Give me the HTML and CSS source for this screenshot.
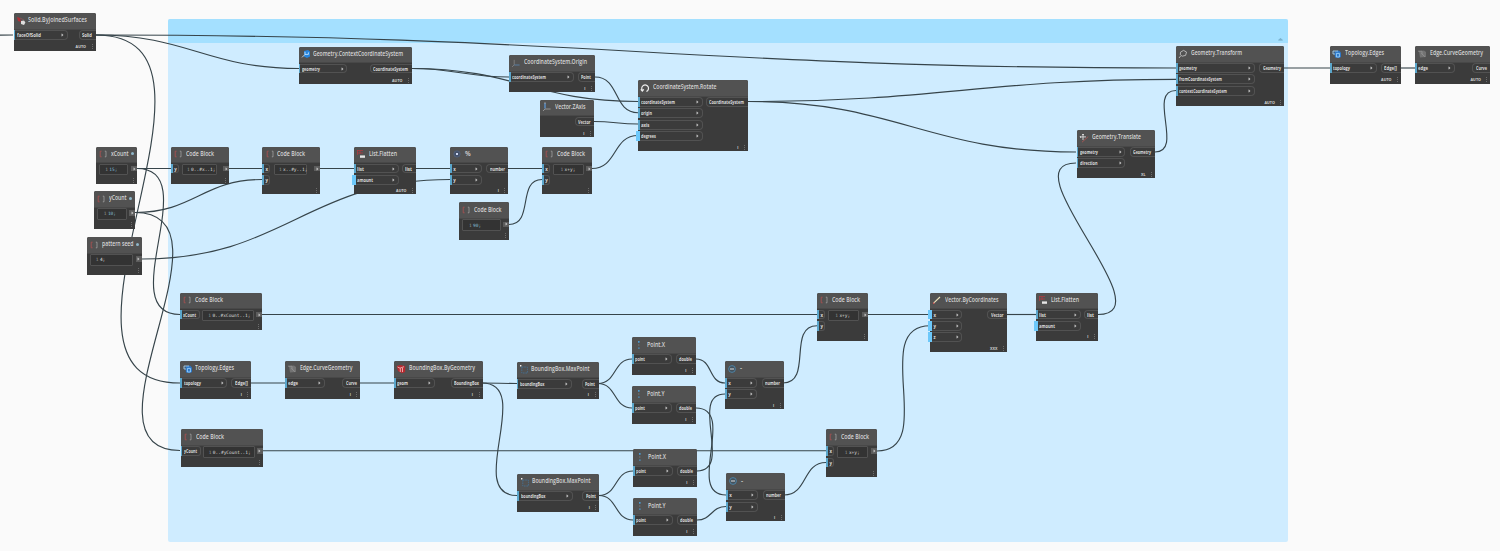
FILE: index.html
```html
<!DOCTYPE html>
<html lang="en">
<head>
<meta charset="utf-8">
<title>Node graph</title>
<link rel="stylesheet" href="styles.css">
</head>
<body>
<main class="canvas" id="canvas">
  <section class="group"><header class="group-head"><svg class="caret" viewBox="0 0 6 4"><path d="M.5 3.5L3 1l2.5 2.5z"/></svg></header></section>
  <svg class="wires" id="wires" viewBox="0 0 1500 551"></svg>
</main>
<script src="graph.js"></script>
</body>
</html>
```
FILE: styles.css
```css
body { margin: 0; background: #fafafa; font-family: "Open Sans", "Noto Sans", sans-serif; }
.canvas { position: relative; width: 1500px; height: 551px; overflow: hidden; }
.group { position: absolute; left: 167.5px; top: 19px; width: 1120.5px; height: 522.5px; background: #cfecff; border-radius: 2px; overflow: hidden; }
.group-head { height: 23.5px; background: #a4e0ff; display: flex; justify-content: flex-end; align-items: flex-end; padding-right: 5px; box-sizing: border-box; }
.caret { width: 5px; height: 4px; margin-bottom: 2px; fill: #7fb4d0; stroke: #6fa6c2; stroke-width: .6; }
.wires { position: absolute; left: 0; top: 0; width: 1500px; height: 551px; fill: none; stroke: #36444a; stroke-width: 1.15; }
.node { position: absolute; box-sizing: border-box; background: #3b3b3b; border-radius: 2px 2px 0 0; color: #e6e6e6; display: flex; flex-direction: column; white-space: nowrap; }
.head { height: 16.5px; flex: none; box-sizing: border-box; background: #525252; border-bottom: 1px solid #484848; border-radius: 2px 2px 0 0; display: flex; align-items: center; gap: 3px; padding-left: 2.2px; }
.icon { width: 10px; height: 10px; flex: none; fill: none; stroke-width: .9; margin-top: -.5px; }
.fit { display: inline-block; flex: none; transform-origin: 0 50%; }
.title { font-size: 6.6px; line-height: 8px; font-weight: 600; color: #d6d6d6; margin-top: -.6px; margin-left: -.3px; }
.dot { width: 3px; height: 3px; border-radius: 50%; background: #8fb6c9; flex: none; margin-left: -.8px; margin-top: -.6px; }
.body { display: flex; justify-content: space-between; flex: 1; padding-top: .6px; min-height: 0; }
.ins, .outs { display: flex; flex-direction: column; gap: 1.4px; }
.outs { align-items: flex-end; }
.port { box-sizing: border-box; height: 9.9px; display: flex; align-items: center; border: 1px solid #525252; font-size: 4.4px; line-height: 6px; font-weight: 700; color: #dcdcdc; }
.in { border-left: 0; border-radius: 0 4px 4px 0; padding-right: 2.6px; justify-content: space-between; position: relative; padding-left: 3.2px; }
.in::before { content: ""; position: absolute; left: 0; top: -1px; bottom: -1px; width: 1.6px; background: #5aa6cb; }
.in.open::before { left: -2px; width: 4px; background: #6cc8fa; }
.in.tiny { border-radius: 0 3px 3px 0; padding-right: 1px; }
.chev { width: 3px; height: 4px; flex: none; fill: #c4c4c4; stroke: #c4c4c4; stroke-width: .5; }
.out { border-right: 0; border-radius: 4px 0 0 4px; padding-left: 2.4px; }
.arrow { width: 6px; height: 5.6px; margin-top: 2.2px; background: #5c5c5c; display: flex; align-items: center; justify-content: center; }
.code { box-sizing: border-box; height: 11.5px; margin-right: auto; background: #333; border: 1px solid #525252; border-radius: 1px; font: 4.5px/9px "DejaVu Sans Mono", monospace; color: #dedede; display: flex; align-items: center; gap: 1.4px; }
.line { color: #969696; }
.blue { color: #82bed5; }
.foot { height: 8px; flex: none; display: flex; justify-content: flex-end; align-items: center; gap: 5.5px; padding-right: 3px; font-size: 3.7px; line-height: 5px; font-weight: 700; color: #d4d4d4; }
.dots { width: 1px; height: 5px; fill: #6c6c6c; }
```
FILE: graph.js
```js
const ICONS = {
  code: '<path stroke="#b35050" stroke-width=".8" d="M3.6 2.2H2.2v5.6h1.4"/><path stroke="#a0a0a0" stroke-width=".8" d="M6.8 2.2h1.2v5.6H6.8"/>',
  solid: '<path fill="#b02f35" d="M1 1l3 1 1 4-3-1z"/><path fill="#ddd" d="M5 5l3-.5 1.4 2L8 9 5 8z"/><path stroke="#a0555a" stroke-width=".6" d="M4 2l4 2"/>',
  list: '<path stroke="#a93c42" stroke-width=".8" d="M1 1.5h6M1 4h6M1.5 1v5M4 1v4"/><path fill="#e6e6e6" d="M4 6.4h5v2.4H4z"/>',
  cs: '<path stroke="#5b9be0" stroke-width="1.2" d="M3 1v5.5"/><path stroke="#a4a4a4" stroke-width=".8" d="M3 7H8.6M3 7L1 9M2 1h2"/>',
  origin: '<path stroke="#858585" stroke-width=".8" d="M3.2 1.8v5L1 9"/><path stroke="#5a89b5" stroke-width=".8" d="M3.2 7h5.4"/>',
  context: '<path fill="#2584de" d="M3 2l4-1 2 1.5v5L6 9 3 7.6z"/><path stroke="#d8efff" stroke-width=".8" d="M1 8.4l3-3V2.8M4 5.4h3.4v-2"/>',
  rotate: '<path stroke="#eee" stroke-width="1.2" d="M2.4 7.4A3.4 3.4 0 1 1 6.4 8.5M.8 6.4l1.5 1.6L3.8 6.4"/>',
  transform: '<path stroke="#bdbdbd" stroke-width=".9" d="M2.5 3.2l3-1.8 3 1.6L7.6 6.4l-3.4.8L2.3 5.8zM2.6 7L1 9"/>',
  translate: '<path stroke="#dcdcdc" d="M1 3.9h6M4 1v6M3 2l1-1 1 1M2 2.9l-1 1 1 1"/><path stroke="#b95855" stroke-width=".8" d="M3 9.2L9.2 3.6"/>',
  edges: '<path fill="#2c77c8" d="M2.5 2.5L7 1.6l2 1.8V8l-2 1-4-.5z"/><path stroke="#a9dcff" stroke-width=".8" d="M1 2v3h2M1 2h5M4.4 4.4h3V8h-3z"/>',
  curve: '<path fill="#737373" d="M2 2l5-.5L9 3v5l-6 .5z"/><path stroke="#9a9a9a" stroke-width=".7" d="M1 2.2h4v3M4.5 4.5L8 7.8"/>',
  box: '<path fill="#b82a30" d="M.8 2l3.4-1L9.2 2v6L6 9.2 2 7z"/><path stroke="#f5c8c8" stroke-width=".8" d="M1.6 3l2.4 1.2 4-1.5M4.3 4.3V8M6.5 4v4"/>',
  max: '<path stroke="#44749a" stroke-width=".8" stroke-dasharray="1.6 .8" d="M2.8 3H8.4v6H2.8z"/><path fill="#eee" d="M1 1h1.4v1.4H1z"/>',
  point: '<path fill="#4c9bd2" d="M4 1h1.6v1.8H4zM4.2 7.4h1.4v1.4H4.2z"/><path fill="#8a8a8a" d="M4.3 4.4h1v1h-1z"/>',
  minus: '<circle cx="5" cy="5" r="3.4" stroke="#4e8eb8" stroke-width=".8" fill="#45525c"/><path stroke="#eee" d="M3 5h4"/>',
  mod: '<circle cx="5" cy="5" r="3.2" stroke="#54667f" stroke-width=".7" fill="#43506a"/><path stroke="#dce8ff" d="M4 4l2 2M6 4L4 6" stroke-width=".9"/>',
  vector: '<path stroke="#eee5bd" stroke-width="1.1" d="M1.6 8.2L8 2"/><path fill="#c95454" d="M1 7.5h1.4v1.4H1z"/>'
};

// Drawn widths of port labels
const LABEL = { faceOfSolid: 24, Solid: 10, geometry: 18, CoordinateSystem: 35, coordinateSystem: 34, origin: 11, axis: 8.5, degrees: 15,
  topology: 17, edge: 10, geom: 11, boundingBox: 24.5, BoundingBox: 25, point: 10, double: 13, number: 15, list: 7, amount: 16,
  fromCoordinateSystem: 43, contextCoordinateSystem: 48, direction: 17.5, Geometry: 18, Vector: 12.5, Point: 10, Curve: 11, 'Edge[]': 13,
  xCount: 13, yCount: 13 };

// x, y, w, h, icon, title, title width, inputs, input width, output, footer
const NODES = [
  [13.5,13,82,37.5,'solid','Solid.ByJoinedSurfaces',59,['faceOfSolid'],54,'Solid','AUTO'],
  [298.6,46.5,113.4,37.5,'context','Geometry.ContextCoordinateSystem',90,['geometry'],48.5,'CoordinateSystem','AUTO'],
  [509,55,86,37,'origin','CoordinateSystem.Origin',63,['coordinateSystem'],64.5,'Point','l'],
  [540,99.5,54,37.5,'cs','Vector.ZAxis',30.5,[],0,'Vector','l'],
  [638,80,110,71,'rotate','CoordinateSystem.Rotate',63.5,['coordinateSystem','origin','axis','degrees*'],64.5,'CoordinateSystem','l'],
  [354,146.5,62,47.5,'list','List.Flatten',28,['list','amount*'],45,'list','AUTO'],
  [450,146.5,58.4,47.5,'mod','%',5,['x','y'],31.5,'number','l'],
  [1176,46,108.4,60,'transform','Geometry.Transform',51,['geometry','fromCoordinateSystem','contextCoordinateSystem'],79,'Geometry','AUTO'],
  [1076.7,130,78.3,48,'translate','Geometry.Translate',49,['geometry','direction'],48.5,'Geometry','XL'],
  [1330,46,71,37.5,'edges','Topology.Edges',39,['topology'],47,'Edge[]','AUTO'],
  [1415.3,46,75.2,37.5,'curve','Edge.CurveGeometry',53,['edge'],39.5,'Curve','AUTO'],
  [180.4,361,71,37.5,'edges','Topology.Edges',39,['topology'],47,'Edge[]','l'],
  [285,361,75.3,37.5,'curve','Edge.CurveGeometry',52.5,['edge'],40,'Curve','l'],
  [394,361,88.5,37.5,'box','BoundingBox.ByGeometry',66,['geom'],41,'BoundingBox','l'],
  [516.5,361.7,82,37.3,'max','BoundingBox.MaxPoint',58.5,['boundingBox'],55.5,'Point','l'],
  [517.4,474,82,37.5,'max','BoundingBox.MaxPoint',58.5,['boundingBox'],55.5,'Point','l'],
  [632,337.2,64,37.6,'point','Point.X',18,['point'],40,'double','l'],
  [632,386.3,64,37.5,'point','Point.Y',17.5,['point'],40,'double','l'],
  [633,449.2,64,37.5,'point','Point.X',18,['point'],40,'double','l'],
  [633,498.3,64,37.5,'point','Point.Y',17.5,['point'],40,'double','l'],
  [725,361,58.7,48,'minus','-',3,['x','y'],32,'number','l'],
  [726,473.4,58.7,48,'minus','-',3,['x','y'],32,'number','l'],
  [930.3,292.5,76.7,59.5,'vector','Vector.ByCoordinates',53.5,['x*','y*','z*'],32,'Vector','XXX'],
  [1036,292.5,62,48,'list','List.Flatten',28,['list','amount*'],44.5,'list','l']
];

// x, y, w, h, title, title width, inputs, input width, code left, code width, code text, code indent, flags
const BLOCKS = [
  [96.2,146.5,41,37.5,'xCount',17.5,[],0,3,29,'15;',5,'blue dot'],
  [94.3,191,41,37.5,'yCount',17.5,[],0,2.5,30,'10;',6,'blue dot'],
  [87.3,237,54.7,37.5,'pattern seed',31.5,[],0,2.5,43,'4;',5,'dot'],
  [171,146.5,58.3,37.5,'Code Block',28,['y'],8,11,34.5,'0..#x..1;',4,''],
  [262.4,146.5,57.7,47.5,'Code Block',28,['x','y'],8,12,33,'x..#y..1;',3.5,''],
  [542,146.5,50.4,47.5,'Code Block',28,['x','y'],8,10.5,31,'x+y;',7,''],
  [459,202.3,50.4,37.5,'Code Block',27.5,[],0,3,39,'90;',6,'blue'],
  [180.3,292.5,82,37.5,'Code Block',28,['xCount'],20,22,52,'0..#xCount..1;',5,''],
  [180.7,429.2,82,37.5,'Code Block',28,['yCount'],20,22,52,'0..#yCount..1;',5,''],
  [817.3,292.5,51,48,'Code Block',28,['x','y'],8,11,31,'x+y;',6,''],
  [826.3,429.2,51,48,'Code Block',28,['x','y'],8,10.5,31,'x+y;',7,'']
];

const WIRES = [
  [-60,36,13,35],[96,35,1176,68],[96,35,299,68.5],[96,35,180,383],[412,68.5,509,77],[412,68.5,638,101.5],[595,77,638,112.7],
  [594,121.5,638,124],[592,168.5,638,135.5],[748,101.5,1176,79.3],[748,101.5,1076,152],[1155,152,1176,90.5],[1284,68,1330,68],
  [1401,68,1415,68],[137,168.5,171,168.5],[137,168.5,180,314.5],[135,212.5,262,179.5],[135,212.5,180,450.5],[142,259,450,179.5],
  [229,168.5,262,168.5],[320,168.5,354,168.5],[416,168.5,450,168.5],[508,168.5,542,168.5],[509,224.5,542,179.5],
  [262,314.5,817,314.5],[251,383,285,383],[360,383,394,383],[482,383,517,383.5],[482,383,517,495.5],[598,383.5,632,359],
  [598,383.5,632,408],[599,495.5,633,471],[599,495.5,633,520],[696,359,725,383],[696,408,726,495],[697,471,725,394],
  [697,520,726,506.5],[783,383,817,325.7],[784,495,826,462.5],[263,450.7,826,450.7],[868,314.5,930,314.5],[877,451,930,325.7],
  [1007,314.5,1036,314.5],[1098,314.5,1076,163]
];

document.getElementById('wires').innerHTML = WIRES.map(([a, b, c, d]) => {
  const r = 0.45 * Math.hypot(c - a, d - b);
  return `<path d="M${a} ${b}C${a + r} ${b} ${c - r} ${d} ${c} ${d}"/>`;
}).join('');

const text = (s, w, cls = '') => `<span class="fit ${cls}" data-w="${w || ''}">${s}</span>`;
const chevron = '<svg class="chev" viewBox="0 0 3 4"><path d="M.8.8L2.2 2 .8 3.2z"/></svg>';
const head = (icon, title, w, dot) =>
  `<div class="head"><svg class="icon" viewBox="0 0 10 10">${ICONS[icon]}</svg>${text(title, w, 'title')}${dot ? '<i class="dot"></i>' : ''}</div>`;
const foot = s => `<div class="foot"><span>${s}</span><svg class="dots" viewBox="0 0 1 5"><path d="M0 0h1v1H0zM0 2h1v1H0zM0 4h1v1H0z"/></svg></div>`;
const ports = (list, w, tiny) => list.map(raw => {
  const name = raw.replace('*', '');
  const open = raw !== name ? ' open' : '';
  return `<div class="port in${open}${tiny ? ' tiny' : ''}" style="width:${w}px">${text(name, LABEL[name])}${tiny ? '' : chevron}</div>`;
}).join('');

const canvas = document.getElementById('canvas');
function place(x, y, w, h, html) {
  const el = document.createElement('article');
  el.className = 'node';
  el.style.cssText = `left:${x}px;top:${y}px;width:${w}px;height:${h}px`;
  el.innerHTML = html;
  canvas.append(el);
}

for (const [x, y, w, h, icon, title, tw, ins, iw, out, f] of NODES) {
  place(x, y, w, h, head(icon, title, tw) +
    `<div class="body"><div class="ins">${ports(ins, iw)}</div><div class="outs"><div class="port out" style="width:${LABEL[out] + 7}px">${text(out, LABEL[out])}</div></div></div>` + foot(f));
}
for (const [x, y, w, h, title, tw, ins, iw, cl, cw, code, indent, flags] of BLOCKS) {
  place(x, y, w, h, head('code', title, tw, flags.includes('dot')) +
    `<div class="body"><div class="ins">${ports(ins, iw, true)}</div>` +
    `<div class="code" style="margin-left:${cl - iw}px;width:${cw}px;padding-left:${indent}px"><span class="line">1</span><span class="${flags.includes('blue') ? 'blue' : ''}">${code}</span></div>` +
    `<div class="arrow">${chevron}</div></div>` + foot(''));
}

// Condense each label horizontally to its drawn width
document.querySelectorAll('[data-w]').forEach(el => {
  const w = parseFloat(el.dataset.w);
  if (!w || el.textContent.length < 2) return;
  const natural = el.getBoundingClientRect().width;
  el.style.transform = `scaleX(${w / natural})`;
  el.style.marginRight = `${w - natural}px`;
});
```
